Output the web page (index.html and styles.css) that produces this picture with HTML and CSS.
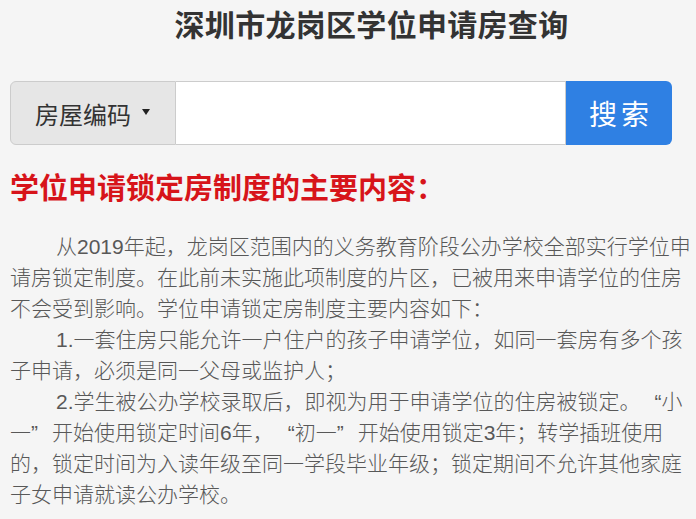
FILE: index.html
```html
<!doctype html>
<html lang="zh-CN">

<head>
  <meta charset="utf-8" />
  <meta name="viewport" content="width=device-width,initial-scale=1" />
  <title>深圳市龙岗区学位申请房查询</title>

  <link rel="stylesheet" href="styles.css">
</head>

<body>
  <div class="page">
    <h1 class="title">深圳市龙岗区学位申请房查询</h1>

    <form class="search" onsubmit="return false">
      <div class="search-type">房屋编码<span class="caret"></span></div>
      <input class="search-input" type="text" />
      <button class="search-btn" type="submit">搜索</button>
    </form>

    <h2 class="subtitle">学位申请锁定房制度的主要内容：</h2>

    <div class="content">
      <p>从2019年起，龙岗区范围内的义务教育阶段公办学校全部实行学位申请房锁定制度。在此前未实施此项制度的片区，已被用来申请学位的住房不会受到影响。学位申请锁定房制度主要内容如下：</p>
      <p>1.一套住房只能允许一户住户的孩子申请学位，如同一套房有多个孩子申请，必须是同一父母或监护人；</p>
      <p>2.学生被公办学校录取后，即视为用于申请学位的住房被锁定。<span class="lq">“</span>小一<span class="rq">”</span>开始使用锁定时间6年，<span class="lq">“</span>初一<span class="rq">”</span>开始使用锁定3年；转学插班使用的，锁定时间为入读年级至同一学段毕业年级；锁定期间不允许其他家庭子女申请就读公办学校。</p>
    </div>
  </div>
</body>

</html>
```

FILE: styles.css
```css
html,
body {
  margin: 0;
  padding: 0;
  background: #f5f5f5;
}

body {
  font-family: "Liberation Sans", "Noto Sans CJK SC", sans-serif;
}

.page {
  padding: 6px 4px 0 10px;
}

.title {
  margin: 0;
  padding-left: 41px;
  text-align: center;
  font-size: 30px;
  line-height: 40px;
  letter-spacing: 0.3px;
  font-weight: bold;
  color: #333;
}

/* 搜索栏 */
.search {
  display: flex;
  width: 662px;
  height: 64px;
  margin: 35px 0 0;
}

.search-type {
  box-sizing: border-box;
  width: 166px;
  display: flex;
  align-items: center;
  padding-left: 24px;
  font-size: 24px;
  color: #333;
  background: #e6e6e6;
  border: solid 1px #ccc;
  border-radius: 6px 0 0 6px;
}

.caret {
  width: 0;
  height: 0;
  margin-left: 11px;
  margin-top: -2px;
  border-left: 4px solid transparent;
  border-right: 4px solid transparent;
  border-top: 6px solid #222;
}

.search-input {
  flex-grow: 1;
  margin: 0;
  padding: 0 10px;
  font-size: 20px;
  background: #fff;
  border: solid 1px #ccc;
  border-left: 0;
  outline: none;
}

.search-btn {
  width: 106px;
  margin: 0;
  padding: 0 0 0 4px;
  font-family: inherit;
  font-size: 28px;
  letter-spacing: 4px;
  color: #fff;
  background: #2f80e3;
  border: 0;
  border-radius: 0 6px 6px 0;
  cursor: pointer;
}

.subtitle {
  margin: 26px 0 0;
  font-size: 29px;
  line-height: 36px;
  font-weight: bold;
  color: #d7141a;
}

/* 正文 */
.content {
  margin-top: 24px;
  font-size: 21px;
  line-height: 31px;
  font-weight: 300;
  color: #585858;
}

.content p {
  margin: 0;
  text-indent: 46px;
}

/* 引号补足一个全角字宽 */
.content .lq {
  padding-left: 14px;
}

.content .rq {
  padding-right: 14px;
}
```
